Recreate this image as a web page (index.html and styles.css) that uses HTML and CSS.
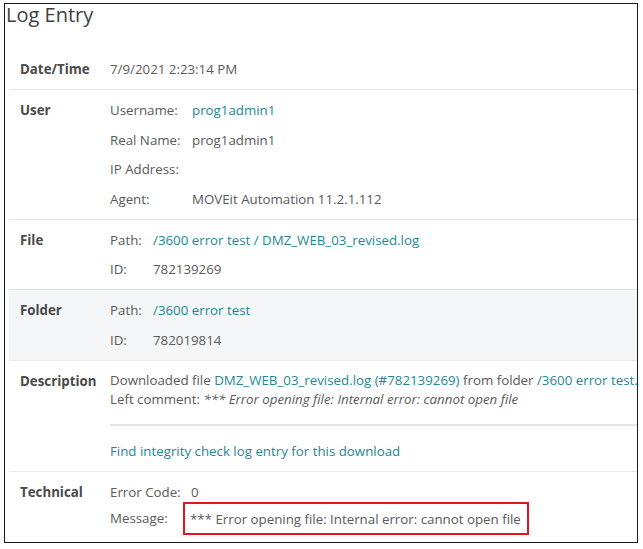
FILE: index.html
```html
<!DOCTYPE html>
<html>
<head>
<meta charset="utf-8">
<link rel="stylesheet" href="styles.css">
</head>
<body>
<div class="frame">
  <h1 class="title">Log Entry</h1>
  <div class="table">
    <div class="row">
      <div class="label">Date/Time</div>
      <div class="value">7/9/2021 2:23:14 PM</div>
    </div>
    <div class="row">
      <div class="label">User</div>
      <div class="value kv kv-user">
        <span>Username:</span><a class="link">prog1admin1</a>
        <span>Real Name:</span><span>prog1admin1</span>
        <span>IP Address:</span><span></span>
        <span>Agent:</span><span>MOVEit Automation 11.2.1.112</span>
      </div>
    </div>
    <div class="row">
      <div class="label">File</div>
      <div class="value kv kv-path">
        <span>Path:</span><span><a class="link">/3600 error test</a> <span class="link">/</span> <a class="link">DMZ_WEB_03_revised.log</a></span>
        <span>ID:</span><span>782139269</span>
      </div>
    </div>
    <div class="row row-shaded">
      <div class="label">Folder</div>
      <div class="value kv kv-path">
        <span>Path:</span><a class="link">/3600 error test</a>
        <span>ID:</span><span>782019814</span>
      </div>
    </div>
    <div class="row">
      <div class="label">Description</div>
      <div class="value desc">
        <div class="desc-text">
          <div class="nowrap">Downloaded file <a class="link">DMZ_WEB_03_revised.log (#782139269)</a> from folder <a class="link">/3600 error test.</a></div>
          <div class="nowrap">Left comment: <em>*** Error opening file: Internal error: cannot open file</em></div>
        </div>
        <div class="desc-sep"></div>
        <a class="link find">Find integrity check log entry for this download</a>
      </div>
    </div>
    <div class="row row-last">
      <div class="label">Technical</div>
      <div class="value kv kv-tech">
        <span>Error Code:</span><span class="code">0</span>
        <span>Message:</span><span class="msg-box">*** Error opening file: Internal error: cannot open file</span>
      </div>
    </div>
  </div>
</div>
</body>
</html>
```

FILE: styles.css
```css
html, body {
  margin: 0;
  padding: 0;
  background: #ffffff;
}

body {
  font-family: "Open Sans", "Noto Sans", "Liberation Sans", sans-serif;
  font-size: 13.3px;
  color: #5a5a5a;
}

.frame {
  box-sizing: border-box;
  width: 634px;
  height: 540px;
  margin: 3px 0 0 4px;
  border: 1px solid #1a1a1a;
}

.title {
  margin: 0;
  padding-left: 1px;
  font-size: 20px;
  line-height: 22px;
  font-weight: 400;
  color: #3f3f3f;
}

.table {
  margin: 23px 0 0 4px;
}

.row {
  display: grid;
  grid-template-columns: 101px 1fr;
  padding: 10px 0 10px 0;
  border-bottom: 1px solid #e6e6e6;
  line-height: 20px;
}

.row-shaded {
  background: #f5f6f7;
}

.row-last {
  border-bottom: none;
  padding-bottom: 0;
}

.label {
  padding-left: 11px;
  font-weight: 700;
  color: #4a4a4a;
}

.value {
  min-width: 0;
}

.desc {
  overflow: hidden;
}

.link {
  color: #1f8893;
  text-decoration: none;
}

.kv {
  display: grid;
  row-gap: 9.5px;
  align-items: center;
}

.kv-user {
  grid-template-columns: 82px auto;
  justify-content: start;
}

.kv-path {
  grid-template-columns: 43px auto;
  justify-content: start;
}

.kv-tech {
  grid-template-columns: 73px auto;
  justify-content: start;
  row-gap: 0;
}

.code {
  padding-left: 8px;
}

.msg-box {
  display: inline-block;
  border: 2px solid #e3141f;
  padding: 5px 6px 4px 5px;
  line-height: 20px;
  white-space: nowrap;
}

.desc-text {
  line-height: 19px;
}

.nowrap {
  white-space: nowrap;
}

.desc-sep {
  height: 2px;
  background: #e4e4e4;
  margin: 15px 0 15px 0;
}

.find {
  display: block;
  line-height: 20px;
}

em {
  font-style: italic;
}
```
